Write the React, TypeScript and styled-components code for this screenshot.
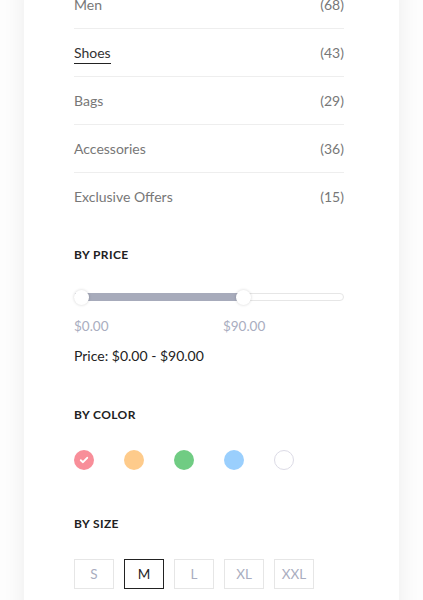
import React from "react";
import styled, { createGlobalStyle } from "styled-components";

const GlobalStyle = createGlobalStyle`
  html, body {
    margin: 0;
    padding: 0;
    background: #fdfdfd;
    overflow: hidden;
  }
  body {
    font-family: "Lato", "Noto Sans", sans-serif;
  }
`;

interface Category {
  name: string;
  count: number;
  active?: boolean;
}

const categories: Category[] = [
  { name: "Men", count: 68 },
  { name: "Shoes", count: 43, active: true },
  { name: "Bags", count: 29 },
  { name: "Accessories", count: 36 },
  { name: "Exclusive Offers", count: 15 },
];

const swatches = ["#f88e99", "#fecb8b", "#70cc83", "#9acffd", "#ffffff"];
const sizes = ["S", "M", "L", "XL", "XXL"];

const PRICE_MAX = 143;
const priceLow = 0;
const priceHigh = 90;

const Page = styled.div`
  width: 423px;
  height: 600px;
  overflow: hidden;
`;

const Card = styled.aside`
  width: 375px;
  margin: -19px 0 0 24px;
  padding: 0 55px 40px 50px;
  box-sizing: border-box;
  background: #fff;
  box-shadow: 0 0 22px rgba(0, 0, 0, 0.07);
`;

const CategoryList = styled.ul`
  list-style: none;
  margin: 0;
  padding: 0;
`;

const CategoryRow = styled.li`
  display: flex;
  justify-content: space-between;
  align-items: center;
  height: 47px;
  border-bottom: 1px solid #eeeeee;
  font-size: 14px;
  color: #777777;

  &:last-child {
    border-bottom: none;
  }
`;

const CategoryName = styled.span<{ $active?: boolean }>`
  color: ${(p) => (p.$active ? "#333333" : "#777777")};
  padding-bottom: 2px;
  margin-top: 2px;
  border-bottom: 1px solid ${(p) => (p.$active ? "#222222" : "transparent")};
`;

const Section = styled.section<{ $top: number }>`
  margin-top: ${(p) => p.$top}px;
`;

const Heading = styled.h4`
  margin: 0 0 27px;
  font-size: 12px;
  line-height: 16px;
  font-weight: 700;
  letter-spacing: 0.4px;
  color: #222222;
`;

const SliderBox = styled.div`
  position: relative;
  height: 14px;
  display: flex;
  align-items: center;
`;

const Track = styled.div`
  position: relative;
  width: 100%;
  height: 8px;
  border-radius: 4px;
  border: 1px solid #e6e6e6;
  box-sizing: border-box;
  background: #fff;
`;

const Fill = styled.div`
  position: absolute;
  top: -1px;
  bottom: -1px;
  background: #a7abbb;
`;

const Thumb = styled.span`
  position: absolute;
  top: -0.5px;
  width: 15px;
  height: 15px;
  margin-left: -7.5px;
  border-radius: 50%;
  background: #fff;
  box-shadow: 0 0 3px rgba(0, 0, 0, 0.18);
`;

const PriceLabels = styled.div`
  position: relative;
  height: 16px;
  margin-top: 14px;
  font-size: 13.5px;
  line-height: 16px;
  color: #a9adc0;
`;

const PriceTag = styled.span`
  position: absolute;
  top: 0;
`;

const PriceText = styled.p`
  margin: 14px 0 0;
  font-size: 14px;
  line-height: 16px;
  color: #222222;
`;

const SwatchRow = styled.div`
  display: flex;
  gap: 30px;
`;

const Swatch = styled.span<{ $color: string }>`
  width: 20px;
  height: 20px;
  border-radius: 50%;
  box-sizing: border-box;
  background: ${(p) => p.$color};
  border: ${(p) => (p.$color === "#ffffff" ? "1px solid #dcdbe6" : "none")};
  display: flex;
  align-items: center;
  justify-content: center;
`;

const SizeRow = styled.div`
  display: flex;
  gap: 10px;
`;

const SizeBox = styled.span<{ $active?: boolean }>`
  width: 40px;
  height: 30px;
  box-sizing: border-box;
  border: 1px solid ${(p) => (p.$active ? "#222222" : "#e6e6e6")};
  color: ${(p) => (p.$active ? "#222222" : "#a9adc0")};
  font-size: 13.5px;
  display: flex;
  align-items: center;
  justify-content: center;
`;

const Check = () => (
  <svg width="10" height="10" viewBox="0 0 10 10">
    <polyline
      points="1.8,5.2 4,7.2 8.2,2.8"
      fill="none"
      stroke="#fff"
      strokeWidth="1.9"
      strokeLinecap="round"
      strokeLinejoin="round"
    />
  </svg>
);

const App: React.FC = () => {
  const lowPct = (priceLow / PRICE_MAX) * 100;
  const highPct = (priceHigh / PRICE_MAX) * 100;
  const fmt = (v: number) => `$${v.toFixed(2)}`;

  return (
    <Page>
      <GlobalStyle />
      <Card>
        <CategoryList>
          {categories.map((c) => (
            <CategoryRow key={c.name}>
              <CategoryName $active={c.active}>{c.name}</CategoryName>
              <span>({c.count})</span>
            </CategoryRow>
          ))}
        </CategoryList>

        <Section $top={27}>
          <Heading>BY PRICE</Heading>
          <SliderBox>
            <Track>
              <Fill style={{ left: `${lowPct}%`, width: `${highPct - lowPct}%` }} />
            </Track>
            <Thumb style={{ left: `calc(${lowPct}% + 7px)` }} />
            <Thumb style={{ left: `${highPct}%` }} />
          </SliderBox>
          <PriceLabels>
            <PriceTag style={{ left: 0 }}>{fmt(priceLow)}</PriceTag>
            <PriceTag style={{ left: `calc(${highPct}% - 21px)` }}>{fmt(priceHigh)}</PriceTag>
          </PriceLabels>
          <PriceText>
            Price: {fmt(priceLow)} - {fmt(priceHigh)}
          </PriceText>
        </Section>

        <Section $top={43}>
          <Heading>BY COLOR</Heading>
          <SwatchRow>
            {swatches.map((s, i) => (
              <Swatch key={s} $color={s}>
                {i === 0 && <Check />}
              </Swatch>
            ))}
          </SwatchRow>
        </Section>

        <Section $top={46}>
          <Heading>BY SIZE</Heading>
          <SizeRow>
            {sizes.map((s) => (
              <SizeBox key={s} $active={s === "M"}>
                {s}
              </SizeBox>
            ))}
          </SizeRow>
        </Section>
      </Card>
    </Page>
  );
};

export default App;
